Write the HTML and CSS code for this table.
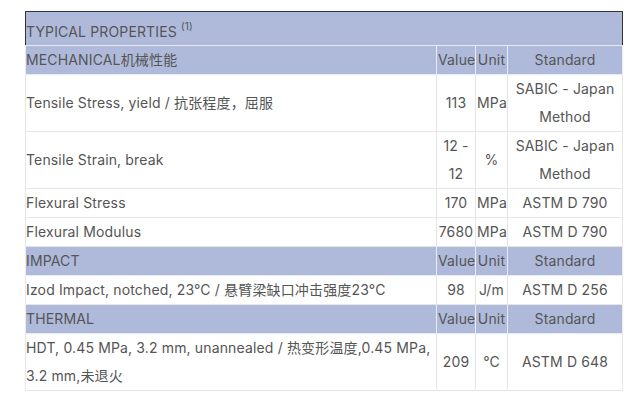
FILE: index.html
```html
<!DOCTYPE html>
<html>
<head>
<meta charset="utf-8">
<link rel="stylesheet" href="styles.css">
</head>
<body>
<div class="wrap">
<table class="props">
<colgroup>
<col class="c-name"><col class="c-val"><col class="c-unit"><col class="c-std">
</colgroup>
<tr class="title"><td colspan="4">TYPICAL PROPERTIES <sup>(1)</sup></td></tr>
<tr class="head"><td class="name">MECHANICAL机械性能</td><td>Value</td><td>Unit</td><td>Standard</td></tr>
<tr><td class="name">Tensile Stress, yield / 抗张程度，屈服</td><td>113</td><td>MPa</td><td>SABIC - Japan Method</td></tr>
<tr><td class="name">Tensile Strain, break</td><td>12 - 12</td><td>%</td><td>SABIC - Japan Method</td></tr>
<tr><td class="name">Flexural Stress</td><td>170</td><td>MPa</td><td>ASTM D 790</td></tr>
<tr><td class="name">Flexural Modulus</td><td>7680</td><td>MPa</td><td>ASTM D 790</td></tr>
<tr class="head"><td class="name">IMPACT</td><td>Value</td><td>Unit</td><td>Standard</td></tr>
<tr><td class="name">Izod Impact, notched, 23°C / 悬臂梁缺口冲击强度23°C</td><td>98</td><td>J/m</td><td>ASTM D 256</td></tr>
<tr class="head"><td class="name">THERMAL</td><td>Value</td><td>Unit</td><td>Standard</td></tr>
<tr><td class="name">HDT, 0.45 MPa, 3.2 mm, unannealed / 热变形温度,0.45 MPa, 3.2 mm,未退火</td><td>209</td><td>°C</td><td>ASTM D 648</td></tr>
</table>
</div>
</body>
</html>
```

FILE: styles.css
```css
html, body { margin: 0; padding: 0; background: #fff; }
.wrap { padding: 11px 18px 0 25px; }
.props {
  width: 597px;
  border-collapse: collapse;
  table-layout: fixed;
  border: 1px solid #333;
  font-family: Inter, "Noto Sans CJK SC", sans-serif;
  font-size: 14px;
  line-height: 28px;
  letter-spacing: 0.15px;
  color: #555;
}
.c-name { width: 411px; }
.c-val { width: 39px; }
.c-unit { width: 32px; }
.c-std { width: 115px; }
.props td {
  padding: 0 1px;
  border: 1px solid #e6e6e6;
  text-align: center;
  vertical-align: middle;
}
.props td.name { text-align: left; padding: 0; }
.title td {
  background: #afbadb;
  text-align: left;
  padding: 6px 0 0;
  line-height: 27px;
  border: 0;
  border-bottom: 1px solid #e8ecf5;
}
.title sup { font-size: 10px; line-height: 0; vertical-align: 7px; }
.head td { background: #afbadb; border-color: #e8ecf5; }
```
